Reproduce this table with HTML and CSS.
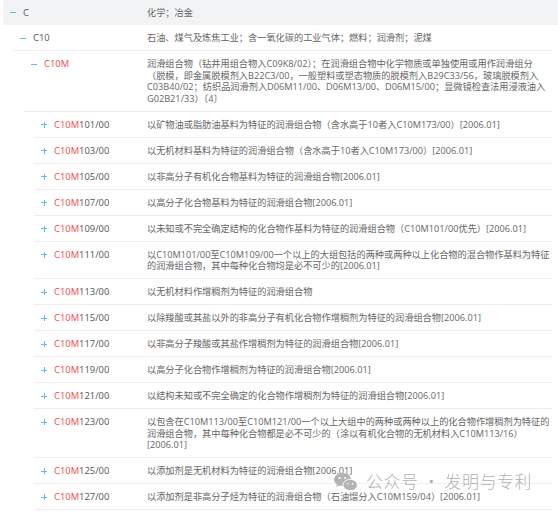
FILE: index.html
```html
<!DOCTYPE html>
<html lang="zh-CN">
<head>
<meta charset="utf-8">
<title>IPC C10M</title>
<link rel="stylesheet" href="styles.css">
</head>
<body>
<div class="tree">
  <div class="row lv0"><div class="head"><span class="sign minus"></span><span class="code">C</span></div><div class="desc">化学；冶金</div></div>
  <div class="row lv1"><div class="head"><span class="sign minus"></span><span class="code">C10</span></div><div class="desc">石油、煤气及炼焦工业；含一氧化碳的工业气体；燃料；润滑剂；泥煤</div></div>
  <div class="row lv2"><div class="head"><span class="sign minus"></span><span class="code"><em>C10M</em></span></div><div class="desc">润滑组合物（钻井用组合物入C09K8/02）；在润滑组合物中化学物质或单独使用或用作润滑组分<br>（脱模，即金属脱模剂入B22C3/00，一般塑料或塑态物质的脱模剂入B29C33/56，玻璃脱模剂入<br>C03B40/02；纺织品润滑剂入D06M11/00、D06M13/00、D06M15/00；显微镜检查法用浸液油入<br>G02B21/33）〔4〕</div></div>
  <div class="row lv3"><div class="head"><span class="sign plus"></span><span class="code"><em>C10M</em>101/00</span></div><div class="desc">以矿物油或脂肪油基料为特征的润滑组合物（含水高于10者入C10M173/00）[2006.01]</div></div>
  <div class="row lv3"><div class="head"><span class="sign plus"></span><span class="code"><em>C10M</em>103/00</span></div><div class="desc">以无机材料基料为特征的润滑组合物（含水高于10者入C10M173/00）[2006.01]</div></div>
  <div class="row lv3"><div class="head"><span class="sign plus"></span><span class="code"><em>C10M</em>105/00</span></div><div class="desc">以非高分子有机化合物基料为特征的润滑组合物[2006.01]</div></div>
  <div class="row lv3"><div class="head"><span class="sign plus"></span><span class="code"><em>C10M</em>107/00</span></div><div class="desc">以高分子化合物基料为特征的润滑组合物[2006.01]</div></div>
  <div class="row lv3"><div class="head"><span class="sign plus"></span><span class="code"><em>C10M</em>109/00</span></div><div class="desc">以未知或不完全确定结构的化合物作基料为特征的润滑组合物（C10M101/00优先）[2006.01]</div></div>
  <div class="row lv3"><div class="head"><span class="sign plus"></span><span class="code"><em>C10M</em>111/00</span></div><div class="desc">以C10M101/00至C10M109/00一个以上的大组包括的两种或两种以上化合物的混合物作基料为特征<br>的润滑组合物，其中每种化合物均是必不可少的[2006.01]</div></div>
  <div class="row lv3"><div class="head"><span class="sign plus"></span><span class="code"><em>C10M</em>113/00</span></div><div class="desc">以无机材料作增稠剂为特征的润滑组合物</div></div>
  <div class="row lv3"><div class="head"><span class="sign plus"></span><span class="code"><em>C10M</em>115/00</span></div><div class="desc">以除羧酸或其盐以外的非高分子有机化合物作增稠剂为特征的润滑组合物[2006.01]</div></div>
  <div class="row lv3"><div class="head"><span class="sign plus"></span><span class="code"><em>C10M</em>117/00</span></div><div class="desc">以非高分子羧酸或其盐作增稠剂为特征的润滑组合物[2006.01]</div></div>
  <div class="row lv3"><div class="head"><span class="sign plus"></span><span class="code"><em>C10M</em>119/00</span></div><div class="desc">以高分子化合物作增稠剂为特征的润滑组合物[2006.01]</div></div>
  <div class="row lv3"><div class="head"><span class="sign plus"></span><span class="code"><em>C10M</em>121/00</span></div><div class="desc">以结构未知或不完全确定的化合物作增稠剂为特征的润滑组合物[2006.01]</div></div>
  <div class="row lv3"><div class="head"><span class="sign plus"></span><span class="code"><em>C10M</em>123/00</span></div><div class="desc">以包含在C10M113/00至C10M121/00一个以上大组中的两种或两种以上的化合物作增稠剂为特征的<br>润滑组合物，其中每种化合物都是必不可少的（涂以有机化合物的无机材料入C10M113/16）<br>[2006.01]</div></div>
  <div class="row lv3"><div class="head"><span class="sign plus"></span><span class="code"><em>C10M</em>125/00</span></div><div class="desc">以添加剂是无机材料为特征的润滑组合物[2006.01]</div></div>
  <div class="row lv3"><div class="head"><span class="sign plus"></span><span class="code"><em>C10M</em>127/00</span></div><div class="desc">以添加剂是非高分子烃为特征的润滑组合物（石油馏分入C10M159/04）[2006.01]</div></div>
</div>
<div class="watermark">
  <svg class="wx" width="25" height="19" viewBox="0 0 25 19">
    <path d="M9.5 1C4.6 1 1 4 1 7.6c0 2 1.1 3.8 2.9 5l-.8 2.4 2.9-1.5c1.1.3 2.2.5 3.5.5 4.9 0 8.5-3 8.5-6.6S14.4 1 9.5 1z" fill="#b3b3b3"/>
    <circle cx="6.6" cy="6" r="1.1" fill="#fff"/>
    <circle cx="12.2" cy="6" r="1.1" fill="#fff"/>
    <path d="M17.2 7.4c-4 0-7.2 2.6-7.2 5.6s3.2 5.6 7.2 5.6c.9 0 1.8-.1 2.6-.4l2.5 1.2-.7-2c1.7-1 2.8-2.6 2.8-4.4 0-3-3.2-5.6-7.2-5.6z" fill="#b3b3b3" stroke="#fff" stroke-width="1"/>
    <circle cx="14.8" cy="11.8" r=".9" fill="#fff"/>
    <circle cx="19.6" cy="11.8" r=".9" fill="#fff"/>
  </svg>
  <span class="wm-text">公众号 · 发明与专利</span>
</div>
</body>
</html>
```
FILE: styles.css
```css
html, body {
  margin: 0;
  padding: 0;
  background: #fff;
}
body {
  font-family: "Open Sans", "Noto Sans CJK SC", sans-serif;
  font-size: 9.2px;
  line-height: 11.5px;
  color: #666;
  position: relative;
  height: 512px;
  overflow: hidden;
}
.tree {
  width: 553px;
}
.row {
  display: flex;
  padding: 7px 0 6.5px;
  border-bottom: 1px solid #efefef;
}
.head {
  display: flex;
  align-items: flex-start;
  flex: none;
  padding-left: 7px;
  box-sizing: border-box;
}
.desc {
  flex: 1;
  min-width: 0;
  color: #666;
}
.code {
  color: #555;
  font-size: 9.4px;
}
.code em {
  font-style: normal;
  color: #f4474a;
}
.lv0 {
  margin-left: 3px;
  margin-right: -5px;
  background: #f2f3f5;
  border-bottom: none;
  padding: 6.5px 0 7px;
}
.lv0 .head { width: 144px; }
.lv1 { margin-left: 13px; }
.lv1 .head { width: 134px; }
.lv2 { margin-left: 24px; }
.lv2 .head { width: 123px; }
.lv3 { margin-left: 34px; }
.lv3 .head { width: 113px; }
.sign {
  position: relative;
  width: 6px;
  height: 11.5px;
  margin-right: 7px;
  flex: none;
}
.sign::before {
  content: "";
  position: absolute;
  left: 0;
  top: 5.5px;
  width: 6px;
  height: 1px;
  background: #5cc3d6;
}
.plus::after {
  content: "";
  position: absolute;
  left: 2.5px;
  top: 3px;
  width: 1px;
  height: 6px;
  background: #5cc3d6;
}
.watermark {
  position: absolute;
  left: 333px;
  top: 471px;
  display: flex;
  align-items: center;
  gap: 8px;
  pointer-events: none;
}
.wm-text {
  font-family: "Noto Sans CJK SC", sans-serif;
  font-size: 17px;
  line-height: 20px;
  font-weight: 300;
  color: rgba(140, 140, 140, 0.7);
  letter-spacing: 0.5px;
}
```
